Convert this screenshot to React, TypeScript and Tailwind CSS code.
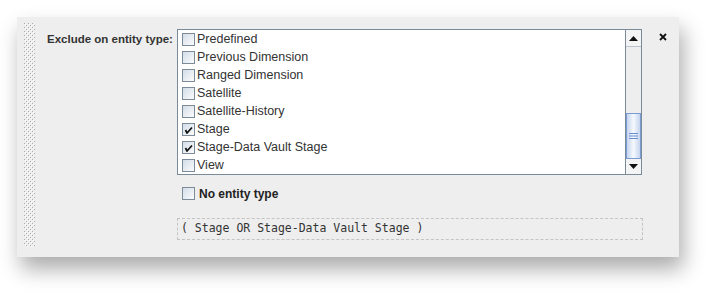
import React from "react";

const items = [
  { name: "Predefined", checked: false },
  { name: "Previous Dimension", checked: false },
  { name: "Ranged Dimension", checked: false },
  { name: "Satellite", checked: false },
  { name: "Satellite-History", checked: false },
  { name: "Stage", checked: true },
  { name: "Stage-Data Vault Stage", checked: true },
  { name: "View", checked: false },
];

const Check = ({ checked }: { checked: boolean }) => (
  <div className="relative w-[13px] h-[13px] shrink-0 border border-[#7d8b99] bg-gradient-to-br from-[#d3dde8] to-[#fbfcfd]">
    {checked && (
      <svg className="absolute left-[1px] top-[2px]" width="9" height="8" viewBox="0 0 9 8">
        <path d="M1.5 4 L3 7 L8 1.5" stroke="#111" strokeWidth="1.7" fill="none" />
      </svg>
    )}
  </div>
);

const Grip = () => (
  <svg width="11" height="224" className="block">
    <defs>
      <pattern id="dots" width="4" height="4" patternUnits="userSpaceOnUse">
        <rect x="0" y="0" width="1" height="1" fill="#a9a9a9" />
        <rect x="2" y="2" width="1" height="1" fill="#a9a9a9" />
        <rect x="1" y="1" width="1" height="1" fill="#ffffff" />
        <rect x="3" y="3" width="1" height="1" fill="#ffffff" />
      </pattern>
    </defs>
    <rect width="11" height="224" fill="url(#dots)" />
  </svg>
);

const App = () => {
  return (
    <div className="w-[727px] h-[305px] bg-white pl-[17px] pt-[17px] font-['Liberation_Sans',Arial,sans-serif]">
      <div className="flex w-[662px] h-[240px] bg-[#eeeeee] shadow-[4px_12px_20px_rgba(0,0,0,0.33)]">
        <div className="ml-[7px] mt-[6px]">
          <Grip />
        </div>
        <div className="ml-[12px] w-[130px] pt-[14px] text-[11.5px] font-bold text-[#333] whitespace-nowrap">
          Exclude on entity type:
        </div>
        <div className="flex flex-col pt-[12px]">
          <div className="flex w-[465px] h-[146px] border border-[#7a8a99] bg-white">
            <div className="flex-1 flex flex-col">
              {items.map((it) => (
                <div key={it.name} className="flex items-center h-[18px] pl-[4px] gap-[2px] text-[12.5px] text-[#333]">
                  <Check checked={it.checked} />
                  <span>{it.name}</span>
                </div>
              ))}
            </div>
            <div className="flex flex-col w-[16px] border-l border-[#7a8a99] bg-[#eeeeee]">
              <div className="flex items-center justify-center h-[17px] border-b border-[#b8c4d0] bg-[#f4f4f4]">
                <svg width="9" height="5" viewBox="0 0 9 5">
                  <path d="M0 5 L4.5 0 L9 5 Z" fill="#111" />
                </svg>
              </div>
              <div className="flex-1" />
              <div className="flex items-center justify-center h-[46px] border border-[#7b9bd3] bg-gradient-to-r from-[#c5d5ef] via-[#f6f9fd] to-[#c5d5ef]">
                <svg width="9" height="6" viewBox="0 0 9 6">
                  <rect y="0" width="9" height="1" fill="#6b8fd0" />
                  <rect y="2.5" width="9" height="1" fill="#6b8fd0" />
                  <rect y="5" width="9" height="1" fill="#6b8fd0" />
                </svg>
              </div>
              <div className="flex items-center justify-center h-[15px] bg-[#f4f4f4]">
                <svg width="9" height="5" viewBox="0 0 9 5">
                  <path d="M0 0 L4.5 5 L9 0 Z" fill="#111" />
                </svg>
              </div>
            </div>
          </div>
          <div className="flex items-center h-[13px] mt-[12px] pl-[5px] gap-[4px] text-[12px] font-bold text-[#222]">
            <Check checked={false} />
            <span>No entity type</span>
          </div>
          <div className="flex items-center w-[466px] h-[22px] mt-[18px] pl-[3px] border border-dashed border-[#c4c4c4] font-['DejaVu_Sans_Mono',monospace] text-[11.5px] text-[#333]">
            ( Stage OR Stage-Data Vault Stage )
          </div>
        </div>
        <div className="ml-[16px] mt-[16px]">
          <svg width="8" height="8" viewBox="0 0 8 8">
            <path d="M1 1 L7 7 M7 1 L1 7" stroke="#111" strokeWidth="1.8" />
          </svg>
        </div>
      </div>
    </div>
  );
};

export default App;
